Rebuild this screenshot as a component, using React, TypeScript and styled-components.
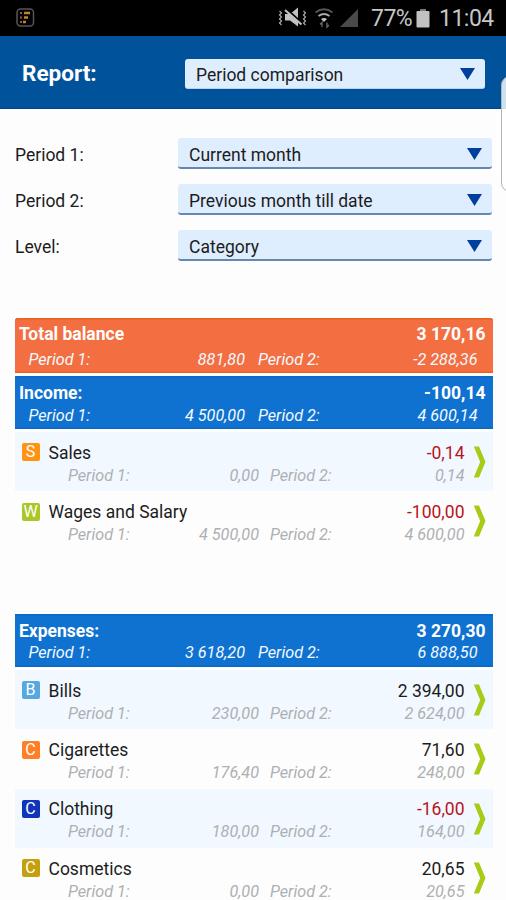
import React from "react";
import styled, { createGlobalStyle } from "styled-components";

const GlobalStyle = createGlobalStyle`
  *, *::before, *::after { box-sizing: border-box; }
  html, body { margin: 0; padding: 0; overflow: hidden; }
  body { background: #fdfdfd; font-family: Roboto, "Liberation Sans", sans-serif; }
`;

const Screen = styled.div`
  position: relative;
  width: 506px;
  height: 900px;
  overflow: hidden;
  background: #fdfdfd;
  color: #1c1c1c;
  font-size: 17.5px;
`;

const StatusBar = styled.div`
  display: flex;
  align-items: center;
  height: 36px;
  padding: 0 13.5px 0 16px;
  background: #000;
  color: #c6c6c6;
`;

const StatusIcons = styled.div`
  display: flex;
  align-items: center;
  margin-left: auto;
`;

const StatusText = styled.span<{ $width: number; $gap: number }>`
  width: ${(p) => p.$width}px;
  margin-left: ${(p) => p.$gap}px;
  font-size: 23px;
  line-height: 36px;
  padding-top: 2px;
  letter-spacing: -0.5px;
  white-space: nowrap;
`;

const Header = styled.header`
  display: flex;
  align-items: center;
  height: 73px;
  padding: 0 21px 0 22px;
  background: #00539b;
  border-bottom: 1px solid #00458f;
`;

const Title = styled.h1`
  width: 163px;
  margin: 0;
  padding-top: 2px;
  color: #fff;
  font-size: 22.5px;
  font-weight: 700;
`;

const SelectBox = styled.div<{ $flat?: boolean }>`
  display: flex;
  flex: 1;
  align-items: center;
  justify-content: space-between;
  height: ${(p) => (p.$flat ? 30 : 31)}px;
  margin-top: ${(p) => (p.$flat ? 3 : 0)}px;
  padding: ${(p) => (p.$flat ? "3px 10px 0 11px" : "4px 10px 0 11px")};
  border-radius: 3px;
  border-bottom: ${(p) => (p.$flat ? "1px solid #b9d3ee" : "2px solid #6487b4")};
  background: #dfeeff;
  white-space: nowrap;
`;

const Arrow = styled.svg`
  width: 15px;
  height: 12px;
  margin-bottom: 2px;
`;

const Filters = styled.section`
  display: grid;
  gap: 15px;
  padding: 29px 14px 57px 15px;
`;

const FilterRow = styled.div`
  display: flex;
  align-items: center;
  height: 31px;
`;

const FilterLabel = styled.span`
  width: 163px;
  padding-top: 2px;
`;

const Table = styled.main`
  padding: 0 13.5px 0 14.5px;
`;

type Tone = "total" | "section";

const Summary = styled.div<{ $tone: Tone }>`
  height: ${(p) => (p.$tone === "total" ? 55 : 53)}px;
  margin-bottom: 3px;
  padding-top: ${(p) => (p.$tone === "total" ? 4 : 6)}px;
  background: ${(p) => (p.$tone === "total" ? "#f36e41" : "#0f72d0")};
  box-shadow: inset 0 1.5px ${(p) => (p.$tone === "total" ? "#e9621f" : "#0b69c6")},
    inset 0 -1.5px ${(p) => (p.$tone === "total" ? "#e9621f" : "#0b69c6")};
  border-radius: ${(p) => (p.$tone === "total" ? "3px 3px 0 0" : "0")};
  color: #fff;
`;

const SummaryTop = styled.div<{ $tone: Tone }>`
  display: flex;
  justify-content: space-between;
  padding: 0 7px 0 4.5px;
  line-height: ${(p) => (p.$tone === "total" ? 25 : 22.5)}px;
  font-weight: 700;
`;

const Detail = styled.div<{ $nested?: boolean; $tone?: Tone }>`
  display: grid;
  grid-template-columns: ${(p) => (p.$nested ? "64px 127px 11px 64px 130.5px" : "64px 152.5px 13px 64px 155.5px")};
  padding-top: ${(p) => (p.$nested ? 0.8 : 0)}px;
  padding-left: ${(p) => (p.$nested ? 53.5 : 14)}px;
  line-height: ${(p) => (p.$tone === "total" ? 25 : 22.5)}px;
  color: ${(p) => (p.$nested ? "#adb0b2" : "#f4faff")};
  font-size: 16.2px;
  font-style: italic;
  white-space: nowrap;
`;

const DetailValue = styled.span`
  text-align: right;
`;

const Row = styled.div<{ $shaded: boolean }>`
  position: relative;
  height: 59.4px;
  padding-top: 9.5px;
  background: ${(p) => (p.$shaded ? "#f1f8ff" : "#fdfdfd")};
`;

const RowTop = styled.div`
  display: flex;
  align-items: center;
  height: 22.4px;
  padding: 0 28px 0 7px;
`;

const Badge = styled.span<{ $color: string }>`
  width: 18px;
  height: 18px;
  margin: 0 9px 1px 0;
  border-radius: 2px;
  background: ${(p) => p.$color};
  color: #fff;
  font-size: 16px;
  line-height: 18px;
  text-align: center;
`;

const Amount = styled.span<{ $negative: boolean }>`
  margin-left: auto;
  color: ${(p) => (p.$negative ? "#b8141d" : "#1c1c1c")};
`;

const Chevron = styled.svg`
  position: absolute;
  top: 14px;
  right: 6.5px;
  width: 13px;
  height: 32px;
`;

const Spacer = styled.div`
  height: 63.2px;
`;

const EdgeHandle = styled.div`
  position: absolute;
  top: 76px;
  left: 500.5px;
  width: 20px;
  height: 116px;
  border: 1px solid #b5b5b5;
  border-radius: 9px;
  background: rgba(255, 255, 255, 0.82);
`;

function Select({ value, flat }: { value: string; flat?: boolean }) {
  return (
    <SelectBox $flat={flat}>
      <span>{value}</span>
      <Arrow viewBox="0 0 15 12">
        <path d="M0 0h15L7.5 12z" fill="#00409c" />
      </Arrow>
    </SelectBox>
  );
}

function Periods({ first, second, nested, tone }: { first: string; second: string; nested?: boolean; tone?: Tone }) {
  return (
    <Detail $nested={nested} $tone={tone}>
      <span>Period 1:</span>
      <DetailValue>{first}</DetailValue>
      <span />
      <span>Period 2:</span>
      <DetailValue>{second}</DetailValue>
    </Detail>
  );
}

function SummaryBlock(p: { tone: Tone; name: string; amount: string; first: string; second: string }) {
  return (
    <Summary $tone={p.tone}>
      <SummaryTop $tone={p.tone}>
        <span>{p.name}</span>
        <span>{p.amount}</span>
      </SummaryTop>
      <Periods first={p.first} second={p.second} tone={p.tone} />
    </Summary>
  );
}

interface Category {
  name: string;
  color: string;
  amount: string;
  first: string;
  second: string;
}

const income: Category[] = [
  { name: "Sales", color: "#ff9412", amount: "-0,14", first: "0,00", second: "0,14" },
  { name: "Wages and Salary", color: "#a9c828", amount: "-100,00", first: "4 500,00", second: "4 600,00" },
];

const expenses: Category[] = [
  { name: "Bills", color: "#56a8df", amount: "2 394,00", first: "230,00", second: "2 624,00" },
  { name: "Cigarettes", color: "#ff7f27", amount: "71,60", first: "176,40", second: "248,00" },
  { name: "Clothing", color: "#0f35b8", amount: "-16,00", first: "180,00", second: "164,00" },
  { name: "Cosmetics", color: "#c4a00f", amount: "20,65", first: "0,00", second: "20,65" },
];

function CategoryRows({ items }: { items: Category[] }) {
  return (
    <>
      {items.map((item, i) => (
        <Row key={item.name} $shaded={i % 2 === 0}>
          <RowTop>
            <Badge $color={item.color}>{item.name[0]}</Badge>
            <span>{item.name}</span>
            <Amount $negative={item.amount.startsWith("-")}>{item.amount}</Amount>
          </RowTop>
          <Periods nested first={item.first} second={item.second} />
          <Chevron viewBox="0 0 13 32">
            <path d="M.8 .5h5.2L12.5 16 6 31.5H.8L7.2 16z" fill="#a8cb16" />
          </Chevron>
        </Row>
      ))}
    </>
  );
}

function AppIcon() {
  return (
    <svg width="19" height="20" viewBox="0 0 19 20" fill="none">
      <rect x="1" y="1" width="16.5" height="17" rx="3.5" stroke="#555" strokeWidth="1.5" />
      <path d="M8 5h6M8 9.5h4M7 14h3" stroke="#c98128" strokeWidth="2.4" />
      <path d="M4 5h2M4 9.5h2M4 14h2" stroke="#8f6330" strokeWidth="2" />
    </svg>
  );
}

function SignalIcons() {
  return (
    <svg width="82" height="24" viewBox="278 6 82 24" fill="none">
      <path d="M280.5 11l2 2-2 2 2 2-2 2 2 2-2 2 2 2M304.5 11l2 2-2 2 2 2-2 2 2 2-2 2 2 2" stroke="#aaa" strokeWidth="1.2" />
      <path d="M286 14h5l8-6.5v19l-8-6h-5z" fill="#c2c2c2" />
      <path d="M287 8.5l16.5 15" stroke="#000" strokeWidth="2" />
      <path d="M286 10l16.5 14.5" stroke="#c2c2c2" strokeWidth="2" />
      <path d="M316.5 12.5q8.5-6.5 17 0" stroke="#555" strokeWidth="1.8" />
      <path d="M319.5 16q5.5-4 11 0" stroke="#aaa" strokeWidth="1.8" />
      <path d="M322 19q3-2 6 0l-3 3z" fill="#c2c2c2" />
      <path d="M323 27v-4.5l-2 2M328 22.5V27l2-2" stroke="#666" strokeWidth="1.4" />
      <path d="M359 9v18h-18z" fill="#4a4a4a" />
    </svg>
  );
}

export default function App() {
  return (
    <Screen>
      <GlobalStyle />
      <StatusBar>
        <AppIcon />
        <StatusIcons>
          <SignalIcons />
          <StatusText $width={45} $gap={12}>77%</StatusText>
          <svg width="14" height="20" viewBox="0 0 14 20">
            <path d="M4 1h6v3H4z" fill="#777" />
            <rect x="0.5" y="3" width="13" height="16.5" rx="1" fill="#c2c2c2" />
          </svg>
          <StatusText $width={53.5} $gap={9}>11:04</StatusText>
        </StatusIcons>
      </StatusBar>
      <Header>
        <Title>Report:</Title>
        <Select flat value="Period comparison" />
      </Header>
      <Filters>
        <FilterRow>
          <FilterLabel>Period 1:</FilterLabel>
          <Select value="Current month" />
        </FilterRow>
        <FilterRow>
          <FilterLabel>Period 2:</FilterLabel>
          <Select value="Previous month till date" />
        </FilterRow>
        <FilterRow>
          <FilterLabel>Level:</FilterLabel>
          <Select value="Category" />
        </FilterRow>
      </Filters>
      <Table>
        <SummaryBlock tone="total" name="Total balance" amount="3 170,16" first="881,80" second="-2 288,36" />
        <SummaryBlock tone="section" name="Income:" amount="-100,14" first="4 500,00" second="4 600,14" />
        <CategoryRows items={income} />
        <Spacer />
        <SummaryBlock tone="section" name="Expenses:" amount="3 270,30" first="3 618,20" second="6 888,50" />
        <CategoryRows items={expenses} />
      </Table>
      <EdgeHandle />
    </Screen>
  );
}
